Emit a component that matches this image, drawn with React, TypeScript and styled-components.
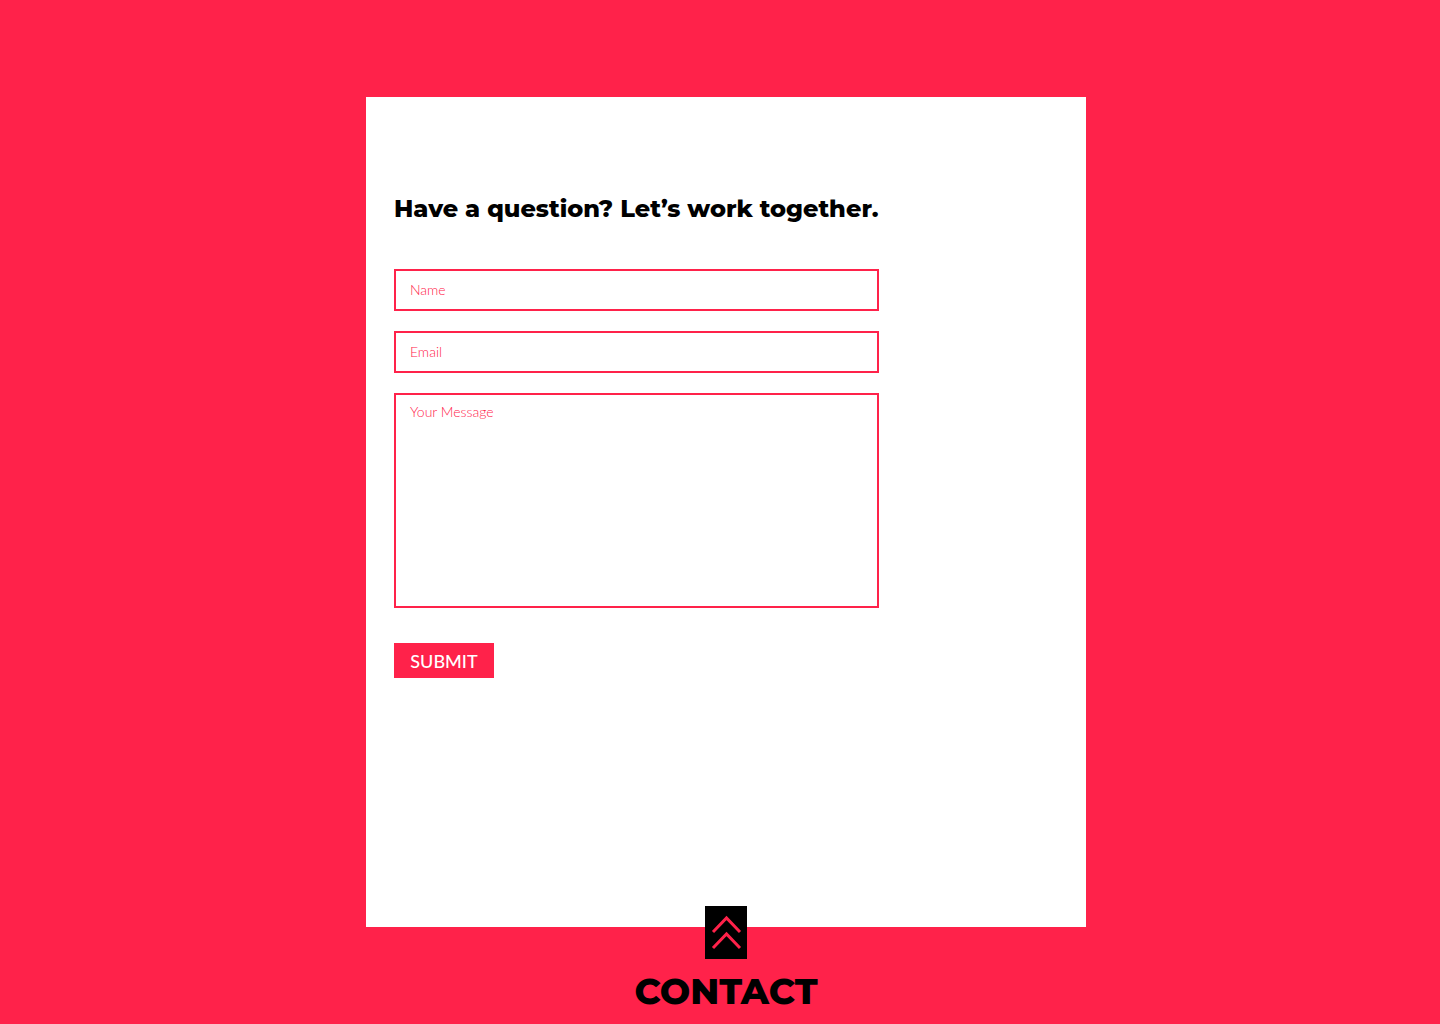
import React from "react";
import styled, { createGlobalStyle, css } from "styled-components";

const accent = "#ff224a";

const GlobalStyle = createGlobalStyle`
  *, *::before, *::after { box-sizing: border-box; }
  body { margin: 0; background: ${accent}; font-family: Lato, sans-serif; }
`;

const Page = styled.main`
  display: flex;
  flex-direction: column;
  align-items: center;
  min-height: 100vh;
  padding: 97px 12px 0 24px;
`;

const Panel = styled.section`
  width: 100%;
  max-width: 720px;
  min-height: 830px;
  padding: 92px 28px;
  background: #fff;
`;

const Form = styled.form`
  display: flex;
  flex-direction: column;
  align-items: flex-start;
  gap: 20px;
  max-width: 485px;
`;

const Heading = styled.h1`
  margin: 0 0 20px;
  font: 800 24px/40px Montserrat, Inter, sans-serif;
  color: #000;
`;

const field = css`
  display: block;
  width: 100%;
  border: 2px solid ${accent};
  border-radius: 0;
  background: #fff;
  color: ${accent};
  font: 300 14px/20px Lato, sans-serif;
  outline: none;
  &::placeholder { color: ${accent}; opacity: 1; }
`;

const TextInput = styled.input`
  ${field}
  height: 42px;
  padding: 7px 14px 9px;
`;

const MessageBox = styled.textarea`
  ${field}
  height: 215px;
  padding: 7px 14px;
  resize: none;
`;

const Submit = styled.button`
  min-width: 100px;
  margin-top: 15px;
  padding: 1px 16px 0;
  border: 0;
  background: ${accent};
  color: #fff;
  font: 500 18px/34px Lato, sans-serif;
  cursor: pointer;
`;

const Footer = styled.footer`
  display: flex;
  flex-direction: column;
  align-items: center;
  gap: 12px;
  margin-top: -21px;
`;

const TopLink = styled.a`
  display: flex;
  align-items: center;
  justify-content: center;
  width: 42px;
  height: 53px;
  background: #000;
`;

const Title = styled.h2`
  margin: 0;
  font: 800 36px/40px Montserrat, Inter, sans-serif;
  color: #000;
`;

export default function App() {
  return (
    <>
      <GlobalStyle />
      <Page>
        <Panel>
          <Form onSubmit={(event: React.FormEvent) => event.preventDefault()}>
            <Heading>Have a question? Let’s work together.</Heading>
            <TextInput type="text" name="name" placeholder="Name" aria-label="Name" />
            <TextInput type="email" name="email" placeholder="Email" aria-label="Email" />
            <MessageBox name="message" placeholder="Your Message" aria-label="Your Message" />
            <Submit type="submit">SUBMIT</Submit>
          </Form>
        </Panel>
        <Footer>
          <TopLink href="#top" aria-label="Back to top">
            <svg width="42" height="53" viewBox="0 0 42 53" fill="none" stroke={accent} strokeWidth="3">
              <path d="M8 26 21.5 12 35 26M8 42 21.5 28 35 42" />
            </svg>
          </TopLink>
          <Title>CONTACT</Title>
        </Footer>
      </Page>
    </>
  );
}
